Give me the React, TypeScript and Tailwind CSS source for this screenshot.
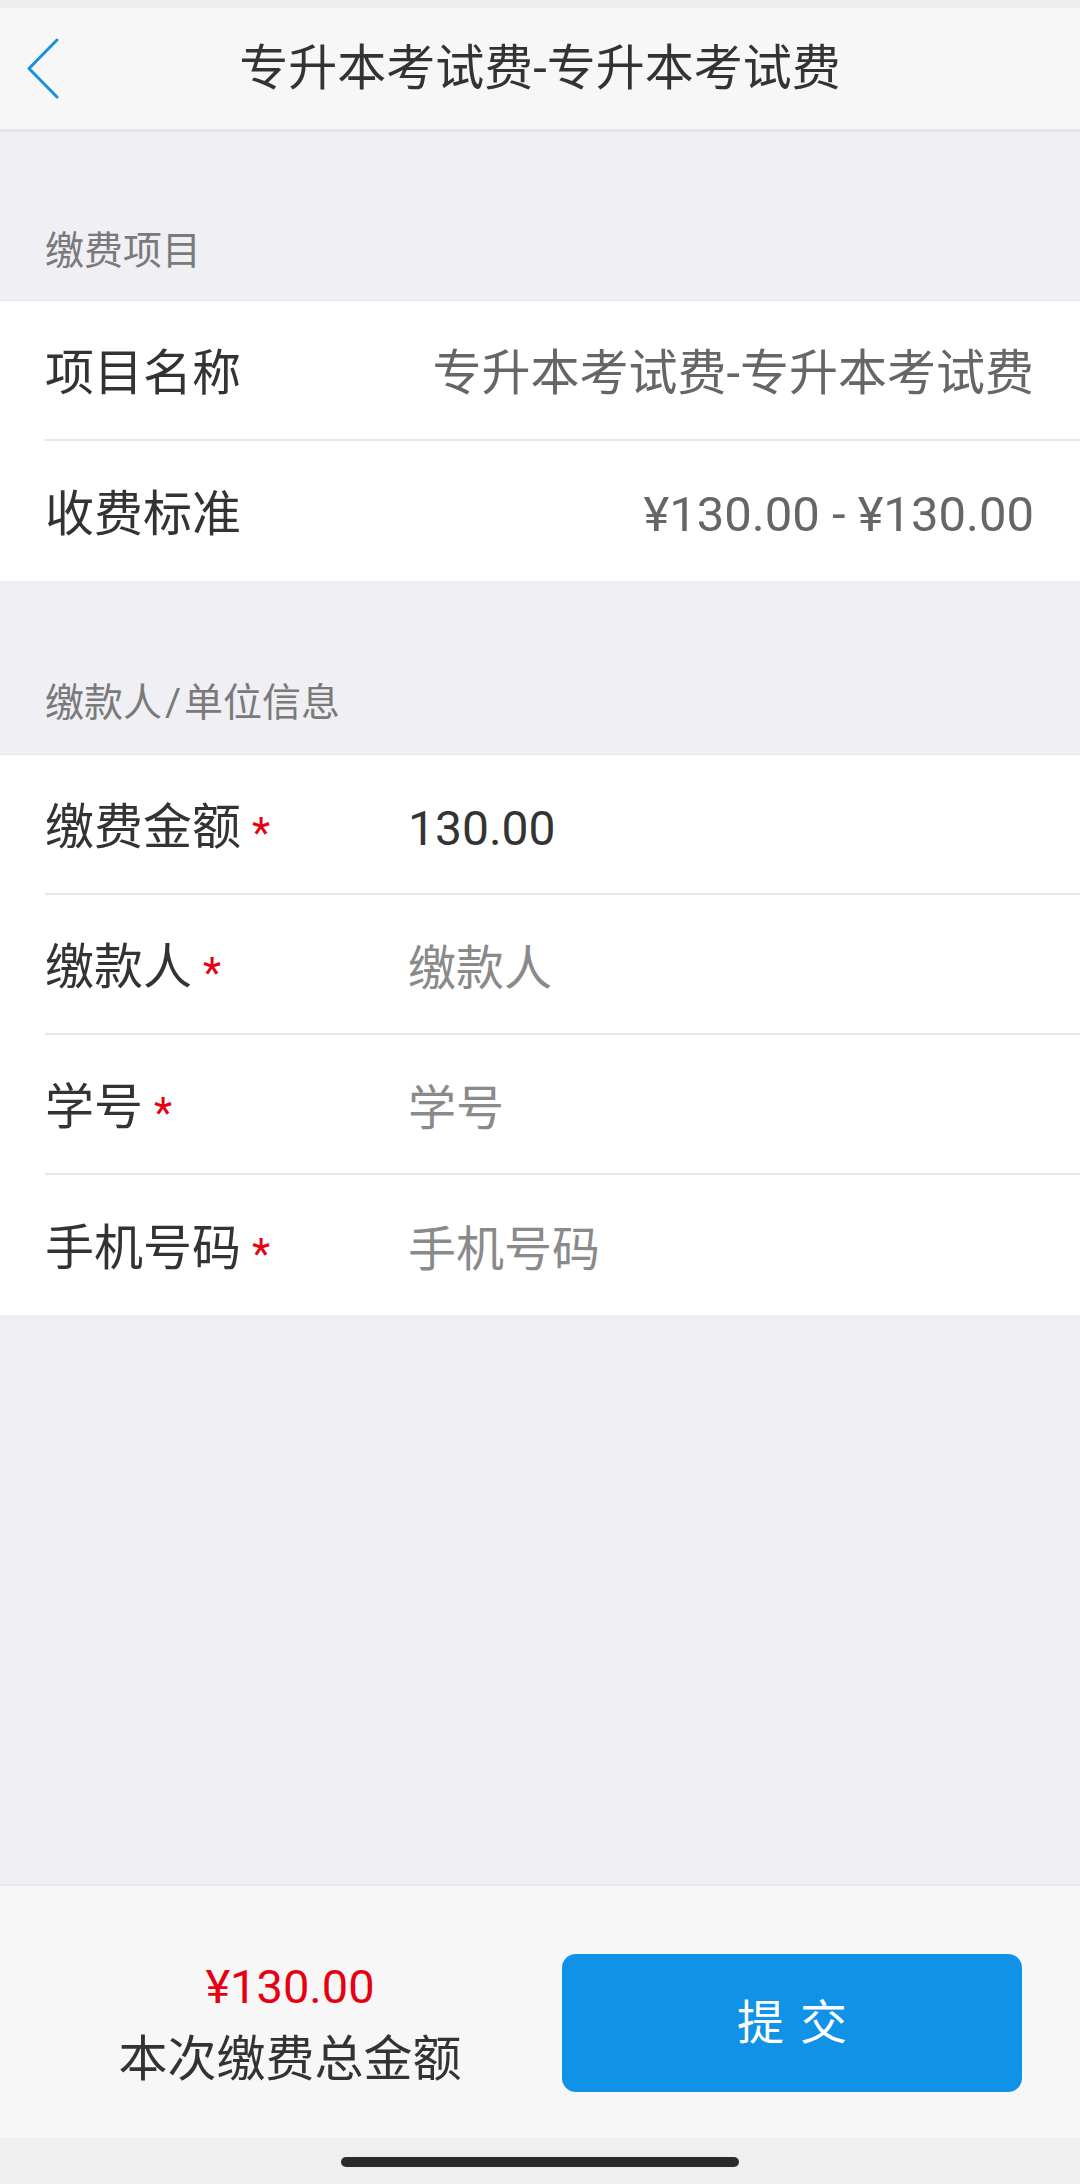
import { useState } from 'react';

interface FieldRow {
  id: string;
  label: string;
  value?: string;
  placeholder: string;
}

const infoRows = [
  { id: 'name', label: '项目名称', value: '专升本考试费-专升本考试费' },
  { id: 'standard', label: '收费标准', value: '¥130.00 - ¥130.00' },
];

const payerRows: Array<FieldRow> = [
  { id: 'amount', label: '缴费金额', value: '130.00', placeholder: '缴费金额' },
  { id: 'payer', label: '缴款人', placeholder: '缴款人' },
  { id: 'studentNo', label: '学号', placeholder: '学号' },
  { id: 'phone', label: '手机号码', placeholder: '手机号码' },
];

function BackIcon() {
  return (
    <svg width="34" height="62" viewBox="0 0 34 62" fill="none">
      <polyline
        points="30,2 2,30.5 30,59"
        stroke="#1a8fe0"
        strokeWidth="3"
        strokeLinecap="round"
        strokeLinejoin="round"
      />
    </svg>
  );
}

function SectionTitle({ children }: { children: React.ReactNode }) {
  return (
    <div className="pl-[45px] text-[39px] leading-[48px] text-[#7a7a7a]">
      {children}
    </div>
  );
}

export default function App() {
  const [values, setValues] = useState<Record<string, string>>({
    amount: '130.00',
  });

  return (
    <div className="flex h-[2184px] w-[1080px] flex-col overflow-hidden bg-[#efeff4] font-[Roboto,'Noto_Sans_CJK_SC',sans-serif]">
      {/* status strip + nav bar */}
      <div className="h-[8px] bg-[#eeeeee]" />
      <header className="grid h-[124px] grid-cols-[140px_1fr_140px] items-center border-b-[3px] border-[#e6e6e6] bg-[#f7f7f7]">
        <button type="button" className="flex h-full items-center pl-[27px]">
          <BackIcon />
        </button>
        <h1 className="text-center text-[49px] leading-none font-normal text-[#333333]">
          专升本考试费-专升本考试费
        </h1>
        <div />
      </header>

      <div className="h-[168px] pt-[95px]">
        <SectionTitle>缴费项目</SectionTitle>
      </div>

      <section className="border-t border-[#e6e6e6] bg-white">
        {infoRows.map((row, i) => (
          <div key={row.id} className="pl-[45px]">
            <div
              className={
                i < infoRows.length - 1
                  ? 'flex h-[140px] items-center justify-between border-b-2 border-[#e8e8e8] pt-[8px] pr-[46px]'
                  : 'flex h-[140px] items-center justify-between pt-[8px] pr-[46px]'
              }
            >
              <span className="text-[49px] text-[#333333]">{row.label}</span>
              <span className="text-[49px] text-[#666666]">{row.value}</span>
            </div>
          </div>
        ))}
      </section>

      <div className="h-[173px] pt-[98px]">
        <SectionTitle>
          缴款人<span className="mx-[3px]">/</span>单位信息
        </SectionTitle>
      </div>

      <section className="border-t border-[#e6e6e6] bg-white">
        {payerRows.map((row, i) => (
          <div key={row.id} className="pl-[45px]">
            <div
              className={
                i < payerRows.length - 1
                  ? 'flex h-[140px] items-center border-b-2 border-[#e8e8e8] pt-[8px]'
                  : 'flex h-[140px] items-center pt-[8px]'
              }
            >
              <label
                htmlFor={row.id}
                className="flex w-[363px] items-center text-[49px] text-[#333333]"
              >
                {row.label}
                <span className="ml-[11px] pt-[10px] text-[42px] leading-none text-[#e60012]">
                  *
                </span>
              </label>
              <input
                id={row.id}
                type="text"
                value={values[row.id] ?? ''}
                onChange={(e) =>
                  setValues((v) => ({ ...v, [row.id]: e.target.value }))
                }
                placeholder={row.placeholder}
                className="h-full flex-1 bg-transparent text-[48px] text-[#333333] placeholder:text-[#8a8a8a] focus:outline-none"
              />
            </div>
          </div>
        ))}
      </section>

      <div className="flex-1" />

      {/* footer */}
      <footer className="flex h-[254px] items-start border-t-2 border-[#e8e8e8] bg-[#f7f7f7] pt-[68px]">
        <div className="flex w-[562px] flex-col items-center pl-[18px] pt-[4px]">
          <span className="text-[47px] leading-[58px] text-[#e60012]">
            ¥130.00
          </span>
          <span className="mt-[14px] text-[49px] leading-[60px] text-[#333333]">
            本次缴费总金额
          </span>
        </div>
        <button
          type="button"
          className="flex h-[138px] w-[460px] items-center justify-center gap-[16px] rounded-[14px] bg-[#1092e6] text-[47px] text-white"
        >
          <span>提</span>
          <span>交</span>
        </button>
      </footer>

      <div className="flex h-[46px] items-start justify-center bg-[#efefef] pt-[19px]">
        <div className="h-[10px] w-[398px] rounded-full bg-[#2b2b2b]" />
      </div>
    </div>
  );
}
